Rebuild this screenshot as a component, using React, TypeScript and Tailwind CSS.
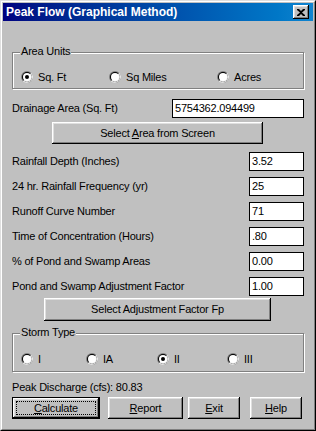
import React from "react";

const font = { fontFamily: '"Liberation Sans", Arial, sans-serif' };

function Radio({ checked }: { checked?: boolean }) {
  return (
    <svg width="12" height="12" viewBox="0 0 12 12" className="shrink-0">
      <circle cx="6" cy="6" r="6" fill="#808080" />
      <path d="M10.24 1.76 A6 6 0 0 1 1.76 10.24 Z" fill="#ffffff" />
      <circle cx="6" cy="6" r="5" fill="#000000" />
      <path d="M9.54 2.46 A5 5 0 0 1 2.46 9.54 Z" fill="#dfdfdf" />
      <circle cx="6" cy="6" r="4" fill="#ffffff" />
      {checked && <circle cx="6" cy="6" r="2" fill="#000000" />}
    </svg>
  );
}

function Option({ label, checked, w }: { label: string; checked?: boolean; w: string }) {
  return (
    <div className={`flex items-center gap-[5px] ${w}`}>
      <Radio checked={checked} />
      <span>{label}</span>
    </div>
  );
}

function Group({ title, children, h }: { title: string; children: React.ReactNode; h: string }) {
  return (
    <div
      className={`relative ${h} border border-[#808080] shadow-[inset_1px_1px_0_#fff,1px_1px_0_#fff]`}
    >
      <span className="absolute -top-[8px] left-[7px] bg-[#c0c0c0] px-[1px] leading-[13px]">{title}</span>
      {children}
    </div>
  );
}

const raised =
  "shadow-[inset_-1px_-1px_0_#000,inset_1px_1px_0_#fff,inset_-2px_-2px_0_#808080,inset_2px_2px_0_#dfdfdf]";

function Button({ children, cls }: { children: React.ReactNode; cls: string }) {
  return (
    <div className={`flex items-center justify-center bg-[#c0c0c0] ${raised} ${cls}`}>
      {children}
    </div>
  );
}

function Field({ label, value }: { label: string; value: string }) {
  return (
    <div className="flex items-center justify-between">
      <span>{label}</span>
      <div className="w-[55px] h-[19px] bg-white border border-black pl-[2px] leading-[17px]">{value}</div>
    </div>
  );
}

export default function App() {
  return (
    <div
      style={font}
      className="w-[316px] h-[431px] bg-[#c0c0c0] border border-t-[#dfdfdf] border-l-[#dfdfdf] border-b-black border-r-black text-[11px] tracking-[-0.2px] text-black overflow-hidden"
    >
      <div className="h-full border border-t-white border-l-white border-b-[#808080] border-r-[#808080] p-[1px]">
        {/* title bar */}
        <div className="h-[18px] flex items-center justify-between bg-gradient-to-r from-[#000080] to-[#1084d0] pl-[3px] pr-[4px]">
          <span className="text-white font-bold text-[12px] tracking-normal leading-none">
            Peak Flow (Graphical Method)
          </span>
          <div className={`w-[16px] h-[14px] bg-[#c0c0c0] flex items-center justify-center ${raised}`}>
            <svg width="8" height="7" viewBox="0 0 8 7">
              <path d="M0 0h2l2 2 2-2h2v1L5 3.5 8 6v1H6L4 5 2 7H0V6l3-2.5L0 1z" fill="#000" />
            </svg>
          </div>
        </div>

        <div className="px-[9px]">
          {/* area units */}
          <div className="mt-[31px]">
            <Group title="Area Units" h="h-[37px]">
              <div className="flex items-center pl-[8px] mt-[16px]">
                <Option label="Sq. Ft" checked w="w-[88px]" />
                <Option label="Sq Miles" w="w-[108px]" />
                <Option label="Acres" w="w-[80px]" />
              </div>
            </Group>
          </div>

          <div className="mt-[10px] flex items-center justify-between">
            <span>Drainage Area (Sq. Ft)</span>
            <div className="w-[132px] h-[19px] bg-white border border-black pl-[2px] leading-[17px]">
              5754362.094499
            </div>
          </div>

          <Button cls="mt-[4px] ml-[40px] w-[211px] h-[22px]">
            <span>
              Select <u>A</u>rea from Screen
            </span>
          </Button>

          <div className="mt-[8px] flex flex-col gap-[6px]">
            <Field label="Rainfall Depth (Inches)" value="3.52" />
            <Field label="24 hr. Rainfall Frequency (yr)" value="25" />
            <Field label="Runoff Curve Number" value="71" />
            <Field label="Time of Concentration (Hours)" value=".80" />
            <Field label="% of Pond and Swamp Areas" value="0.00" />
            <Field label="Pond and Swamp Adjustment Factor" value="1.00" />
          </div>

          <Button cls="mt-[2px] ml-[32px] w-[227px] h-[23px]">
            <span>Select Adjustment Factor Fp</span>
          </Button>

          {/* storm type */}
          <div className="mt-[12px]">
            <Group title="Storm Type" h="h-[39px]">
              <div className="flex items-center pl-[8px] mt-[17px]">
                <Option label="I" w="w-[65px]" />
                <Option label="IA" w="w-[71px]" />
                <Option label="II" checked w="w-[70px]" />
                <Option label="III" w="w-[50px]" />
              </div>
            </Group>
          </div>

          <div className="mt-[9px] leading-[13px]">Peak Discharge (cfs): 80.83</div>

          <div className="mt-[3px] flex items-center">
            <div className="w-[88px] h-[22px] border border-black">
              <Button cls="w-full h-full p-[3px]">
                <div className="w-full h-full border border-dotted border-black flex items-center justify-center">
                  <span>
                    <u>C</u>alculate
                  </span>
                </div>
              </Button>
            </div>
            <Button cls="ml-[8px] w-[75px] h-[22px]">
              <span>
                <u>R</u>eport
              </span>
            </Button>
            <Button cls="ml-[5px] w-[52px] h-[22px]">
              <span>
                <u>E</u>xit
              </span>
            </Button>
            <Button cls="ml-[10px] w-[52px] h-[22px]">
              <span>
                <u>H</u>elp
              </span>
            </Button>
          </div>
        </div>
      </div>
    </div>
  );
}
